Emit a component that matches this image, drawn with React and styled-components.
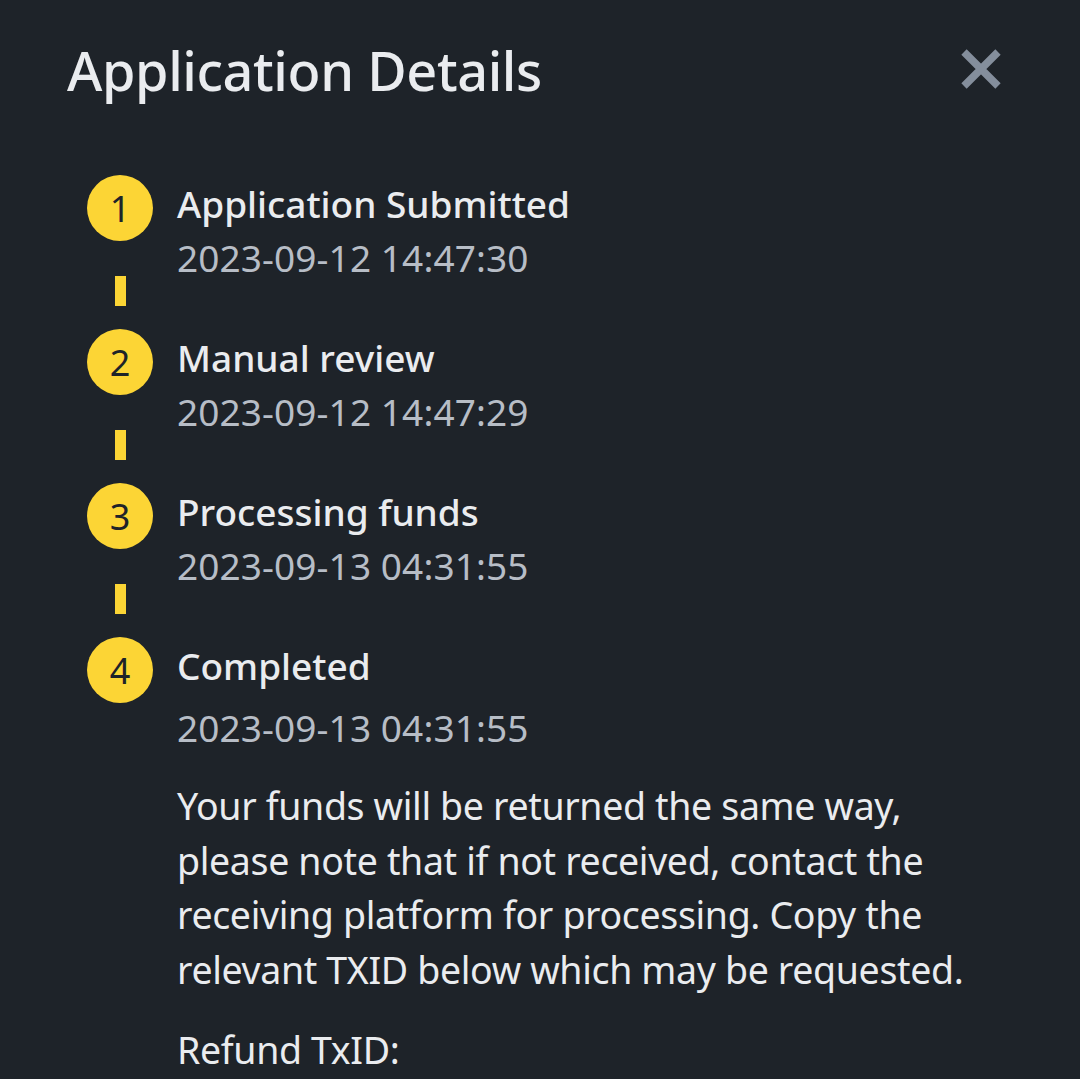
import React from "react";
import styled, { createGlobalStyle } from "styled-components";

const GlobalStyle = createGlobalStyle`
  html, body {
    margin: 0;
    padding: 0;
    background: #1e2329;
  }
  body {
    font-family: "Noto Sans", "Open Sans", sans-serif;
    -webkit-font-smoothing: antialiased;
  }
`;

const steps = [
  { n: 1, title: "Application Submitted", time: "2023-09-12 14:47:30" },
  { n: 2, title: "Manual review", time: "2023-09-12 14:47:29" },
  { n: 3, title: "Processing funds", time: "2023-09-13 04:31:55" },
  { n: 4, title: "Completed", time: "2023-09-13 04:31:55" },
];

const noteLines = [
  "Your funds will be returned the same way,",
  "please note that if not received, contact the",
  "receiving platform for processing. Copy the",
  "relevant TXID below which may be requested.",
];

export default function App() {
  return (
    <>
      <GlobalStyle />
      <Page>
        <Header>
          <Title>Application Details</Title>
          <CloseButton aria-label="Close">
            <svg width="42" height="42" viewBox="0 0 42 42">
              <path
                d="M4 4 L38 38 M38 4 L4 38"
                stroke="#848e9c"
                strokeWidth="7.5"
                strokeLinecap="butt"
              />
            </svg>
          </CloseButton>
        </Header>

        <StepList>
          {steps.map((step, i) => {
            const last = i === steps.length - 1;
            return (
              <Step key={step.n} last={last}>
                <Marker>
                  <Circle>{step.n}</Circle>
                  {!last && <Dash />}
                </Marker>
                <StepBody>
                  <StepTitle>{step.title}</StepTitle>
                  <StepTime last={last}>{step.time}</StepTime>
                  {last && (
                    <>
                      <Note>
                        {noteLines.map((line) => (
                          <NoteLine key={line}>{line}</NoteLine>
                        ))}
                      </Note>
                      <Note>Refund TxID:</Note>
                    </>
                  )}
                </StepBody>
              </Step>
            );
          })}
        </StepList>
      </Page>
    </>
  );
}

const Page = styled.div`
  width: 1080px;
  height: 1079px;
  overflow: hidden;
  background: #1e2329;
  padding: 28px 78px 0 67px;
  box-sizing: border-box;
`;

const Header = styled.div`
  display: flex;
  align-items: center;
  justify-content: space-between;
  height: 84px;
`;

const Title = styled.h1`
  margin: 0;
  font-size: 54px;
  font-weight: 500;
  color: #eaecef;
  letter-spacing: -0.4px;
`;

const CloseButton = styled.button`
  display: flex;
  align-items: center;
  justify-content: center;
  padding: 0;
  border: 0;
  background: none;
  margin-top: -2px;
`;

const StepList = styled.div`
  display: flex;
  flex-direction: column;
  margin-top: 63px;
  padding-left: 20px;
`;

const Step = styled.div`
  display: flex;
  gap: 24px;
  height: ${(p) => (p.last ? "auto" : "154px")};
`;

const Marker = styled.div`
  display: flex;
  flex-direction: column;
  align-items: center;
  width: 66px;
  flex-shrink: 0;
`;

const Circle = styled.div`
  width: 66px;
  height: 66px;
  border-radius: 50%;
  background: #fcd535;
  color: #1e2329;
  display: flex;
  align-items: center;
  justify-content: center;
  font-size: 36px;
  font-weight: 400;
`;

const Dash = styled.div`
  width: 11px;
  height: 30px;
  margin-top: 35px;
  background: #fcd535;
`;

const StepBody = styled.div`
  display: flex;
  flex-direction: column;
  padding-top: 4px;
`;

const StepTitle = styled.div`
  font-size: 37px;
  line-height: 50px;
  font-weight: 500;
  color: #eaecef;
`;

const StepTime = styled.div`
  font-size: 37px;
  line-height: 50px;
  margin-top: ${(p) => (p.last ? "12px" : "4px")};
  color: #b7bdc6;
  letter-spacing: 0.1px;
`;

const Note = styled.p`
  margin: 26px 0 0;
  font-size: 37.5px;
  line-height: 54.5px;
  color: #eaecef;
  letter-spacing: -0.35px;
`;

const NoteLine = styled.span`
  display: block;
  white-space: nowrap;
`;
